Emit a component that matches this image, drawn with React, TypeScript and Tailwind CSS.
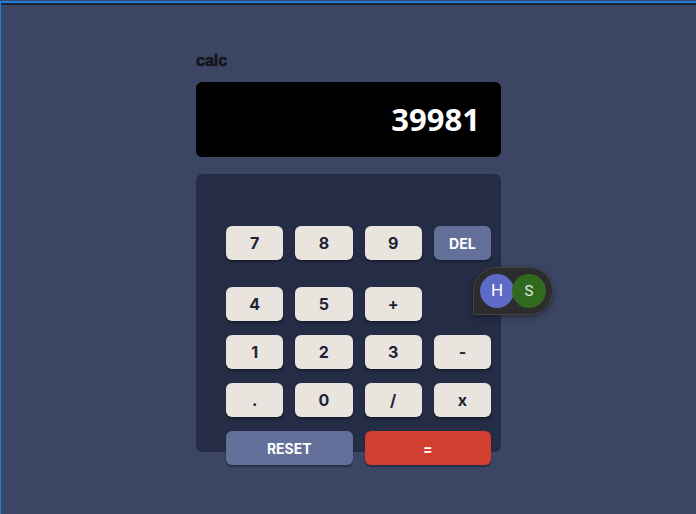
const rows: string[][] = [
  ["7", "8", "9", "DEL"],
  ["4", "5", "+", ""],
  ["1", "2", "3", "-"],
  [".", "0", "/", "x"],
];

function Key({ label }: { label: string }) {
  if (!label) return <div />;
  const isDel = label === "DEL";
  return (
    <button
      className={`flex h-[34px] items-center justify-center rounded-[6px] font-bold shadow-[0_2px_2px_rgba(0,0,0,0.35)] ${
        isDel ? "bg-[#63709a] text-[14px] text-white" : "bg-[#e9e4de] text-[16px] text-[#1f2235]"
      }`}
      style={{ fontFamily: "Inter, 'Liberation Sans', sans-serif" }}
    >
      {label}
    </button>
  );
}

export default function App() {
  return (
    <div className="relative h-[514px] overflow-hidden bg-[#3c4664] pt-px">
      <div className="h-full border-l border-t-2 border-[#1c80dc]">
        <div className="h-[2px] bg-[#1d2436]" />
        <div className="mx-auto w-[305px] pt-[47px]">
          <h1
            className="text-[16px] font-bold leading-[18px] text-[#151518] [-webkit-text-stroke:0.6px_#151518]"
            style={{ fontFamily: "'Liberation Sans', Arial, sans-serif" }}
          >
            calc
          </h1>
          <div className="mt-[12px] flex h-[75px] items-center justify-end rounded-[6px] bg-black pr-[21px]">
            <span
              className="text-[31px] font-bold text-white"
              style={{ fontFamily: "'Open Sans', sans-serif" }}
            >
              39981
            </span>
          </div>
          <div className="mt-[17px] h-[278px] rounded-[6px] bg-[#252d46] pl-[30px] pt-[52px]">
            <div className="grid w-[265px] grid-cols-4 gap-x-[12px]">
              {rows[0].map((k) => (
                <Key key={k} label={k} />
              ))}
            </div>
            <div className="mt-[27px] grid w-[265px] grid-cols-4 gap-x-[12px] gap-y-[14px]">
              {rows.slice(1).flat().map((k, i) => (
                <Key key={i} label={k} />
              ))}
            </div>
            <div className="mt-[14px] grid w-[265px] grid-cols-2 gap-x-[12px]">
              <button
                className="flex h-[34px] items-center justify-center rounded-[6px] bg-[#63709a] text-[14px] font-bold text-white shadow-[0_2px_2px_rgba(0,0,0,0.35)]"
                style={{ fontFamily: "Inter, 'Liberation Sans', sans-serif" }}
              >
                RESET
              </button>
              <button
                className="flex h-[34px] items-center justify-center rounded-[6px] bg-[#d13f31] text-[14px] font-bold text-white shadow-[0_2px_2px_rgba(0,0,0,0.35)]"
                style={{ fontFamily: "Inter, 'Liberation Sans', sans-serif" }}
              >
                =
              </button>
            </div>
          </div>
        </div>
      </div>

      {/* floating extension bubble */}
      <div className="absolute left-[473px] top-[267px] flex h-[48px] w-[80px] items-center rounded-bl-none rounded-br-[24px] rounded-tl-[24px] rounded-tr-[24px] border border-[#444] bg-[#2c2c2c] pl-[6px] shadow-[0_2px_6px_rgba(0,0,0,0.4)]">
        <div
          className="flex h-[34px] w-[34px] items-center justify-center rounded-full bg-[#5d6bc6] text-[17px] text-white"
          style={{ fontFamily: "Roboto, sans-serif" }}
        >
          H
        </div>
        <div
          className="-ml-[2px] flex h-[34px] w-[34px] items-center justify-center rounded-full bg-[#2f6a1f] text-[15px] text-[#e8e8e8]"
          style={{ fontFamily: "Roboto, sans-serif" }}
        >
          S
        </div>
      </div>
    </div>
  );
}
